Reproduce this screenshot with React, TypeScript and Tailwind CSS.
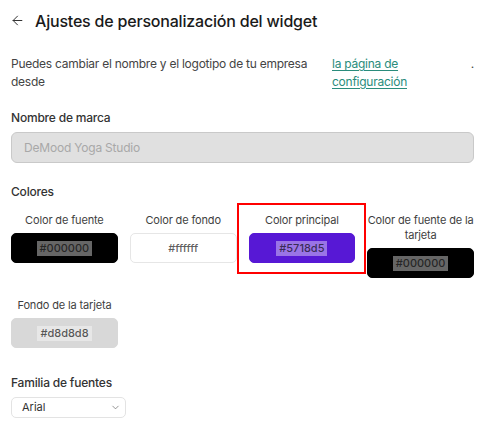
import { ArrowLeft, ChevronDown } from "lucide-react";

const row1 = [
  { label: "Color de fuente", value: "#000000", bg: "bg-[#000000]", border: "border-[#000000]", selected: false },
  { label: "Color de fondo", value: "#ffffff", bg: "bg-[#ffffff]", border: "border-[#e6e6e6]", selected: false },
  { label: "Color principal", value: "#5718d5", bg: "bg-[#5718d5]", border: "border-[#5718d5]", selected: true },
  { label: "Color de fuente de la tarjeta", value: "#000000", bg: "bg-[#000000]", border: "border-[#000000]", selected: false },
];

const row2 = [
  { label: "Fondo de la tarjeta", value: "#d8d8d8", bg: "bg-[#d8d8d8]", border: "border-[#d8d8d8]", selected: false },
];

type Swatch = (typeof row1)[number];

function ColorItem({ label, value, bg, border, selected }: Swatch) {
  return (
    <div className="relative w-[107px] flex flex-col items-center gap-[5px]">
      {selected && (
        <div className="absolute -left-[12px] -top-[10px] w-[129px] h-[71px] border-2 border-[#ff0000] pointer-events-none" />
      )}
      <span className="text-[11px] leading-[15px] tracking-[-0.15px] text-[#3f3f3f] text-center">{label}</span>
      <div className={`w-full h-[30px] rounded-[5px] border ${bg} ${border} flex items-center justify-center`}>
        <span className="px-[3px] text-[11px] leading-[15px] font-medium bg-white/40 text-black/65">{value}</span>
      </div>
    </div>
  );
}

export default function App() {
  return (
    <div className="w-[492px] h-[434px] bg-white pl-[11px] pr-[18px] font-['Inter',sans-serif] text-[#222] overflow-hidden">
      <header className="h-[41px] flex items-center gap-[10px]">
        <ArrowLeft size={15} strokeWidth={1.6} className="text-[#333] -ml-[1px]" />
        <h1 className="text-[16px] font-medium text-[#1a1a1a] tracking-[-0.2px]">
          Ajustes de personalización del widget
        </h1>
      </header>

      <div className="mt-[14px] grid grid-cols-[321px_1fr_auto] text-[12px] leading-[18px] tracking-[-0.25px] text-[#444]">
        <p>Puedes cambiar el nombre y el logotipo de tu empresa desde</p>
        <a href="#" className="text-[#2a8c7c] underline underline-offset-2">
          la página de configuración
        </a>
        <span>.</span>
      </div>

      <label className="block mt-[18px] text-[12px] tracking-[-0.2px] font-medium text-[#333]">Nombre de marca</label>
      <div className="mt-[5px] h-[31px] rounded-[6px] border border-[#c9c9c9] bg-[#e0e0e0] flex items-center px-[12px] text-[12px] tracking-[-0.2px] text-[#a8a8a8]">
        DeMood Yoga Studio
      </div>

      <h2 className="mt-[20px] text-[12px] tracking-[-0.2px] font-medium text-[#333]">Colores</h2>

      <div className="mt-[12px] flex items-start gap-x-[12px]">
        {row1.map((c) => (
          <ColorItem key={c.label} {...c} />
        ))}
      </div>
      <div className="mt-[20px] flex items-start">
        {row2.map((c) => (
          <ColorItem key={c.label} {...c} />
        ))}
      </div>

      <h2 className="mt-[26px] text-[12px] tracking-[-0.2px] font-medium text-[#333]">Familia de fuentes</h2>
      <div className="mt-[5px] w-[115px] h-[21px] rounded-[5px] border border-[#e3e3e3] flex items-center justify-between pl-[10px] pr-[4px] text-[11px] text-[#333]">
        Arial
        <ChevronDown size={11} strokeWidth={1.5} className="text-[#666]" />
      </div>
    </div>
  );
}
